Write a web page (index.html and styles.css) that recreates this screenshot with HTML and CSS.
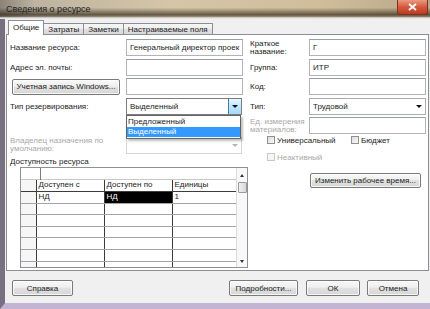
FILE: index.html
```html
<!DOCTYPE html>
<html lang="ru">
<head>
  <meta charset="UTF-8">
  <title>Сведения о ресурсе</title>
  <link rel="stylesheet" href="styles.css">
</head>
<body>
  <div class="window">
    <div class="titlebar">
      <span class="title">Сведения о ресурсе</span>
      <span class="close">
        <svg width="9" height="8" viewBox="0 0 9 8"><path d="M1 1 L8 7 M8 1 L1 7" stroke="#fff" stroke-width="1.8"/></svg>
      </span>
    </div>
    <div class="client">
      <div class="tabs">
        <div class="tab active">Общие</div>
        <div class="tab">Затраты</div>
        <div class="tab">Заметки</div>
        <div class="tab">Настраиваемые поля</div>
      </div>
      <div class="panel">
        <div class="form">
          <label class="lbl">Название ресурса:</label>
          <div class="field">Генеральный директор проек</div>
          <label class="lbl two">Краткое<br>название:</label>
          <div class="field wide">Г</div>

          <label class="lbl">Адрес эл. почты:</label>
          <div class="field"></div>
          <label class="lbl">Группа:</label>
          <div class="field wide">ИТР</div>

          <button class="btn win-btn">Учетная запись Windows...</button>
          <div class="field"></div>
          <label class="lbl">Код:</label>
          <div class="field wide"></div>

          <label class="lbl">Тип резервирования:</label>
          <div class="select focus">
            <span>Выделенный</span>
            <span class="drop"><i class="arrow"></i></span>
            <ul class="list">
              <li>Предложенный</li>
              <li class="hl">Выделенный</li>
            </ul>
          </div>
          <label class="lbl">Тип:</label>
          <div class="select wide plain">
            <span>Трудовой</span>
            <span class="drop"><i class="arrow"></i></span>
          </div>

          <label class="lbl two off r5">Ед. измерения<br>материалов:</label>
          <div class="field wide r5"></div>

          <label class="lbl two off r6">Владелец назначения по<br>умолчанию:</label>
          <div class="select disabled r6">
            <span></span>
            <span class="drop"><i class="arrow"></i></span>
          </div>
          <div class="checks">
            <div class="check-row">
              <span class="chk first"><i class="box"></i>Универсальный</span>
              <span class="chk"><i class="box"></i>Бюджет</span>
            </div>
            <span class="chk off"><i class="box"></i>Неактивный</span>
          </div>

          <label class="lbl section">Доступность ресурса</label>
        </div>

        <div class="avail">
          <div class="datagrid">
            <div class="dg-body">
              <div class="dg-top"><div class="dg-corner"></div></div>
              <table class="dg">
                <colgroup><col class="c0"><col class="c1"><col class="c2"><col class="c3"></colgroup>
                <tr class="dg-head"><td class="rh"></td><td>Доступен с</td><td>Доступен по</td><td>Единицы</td></tr>
                <tr><td class="rh"></td><td>НД</td><td class="sel">НД</td><td>1</td></tr>
                <tr><td class="rh"></td><td></td><td></td><td></td></tr>
                <tr><td class="rh"></td><td></td><td></td><td></td></tr>
                <tr><td class="rh"></td><td></td><td></td><td></td></tr>
                <tr><td class="rh"></td><td></td><td></td><td></td></tr>
                <tr><td class="rh"></td><td></td><td></td><td></td></tr>
                <tr><td class="rh"></td><td></td><td></td><td></td></tr>
              </table>
            </div>
            <div class="vscroll">
              <i class="sarrow up"></i>
              <div class="thumb"></div>
              <i class="sarrow down"></i>
            </div>
          </div>
          <button class="btn work-btn">Изменить рабочее время...</button>
        </div>
      </div>

      <div class="footer">
        <button class="btn help">Справка</button>
        <button class="btn more">Подробности...</button>
        <button class="btn ok">ОК</button>
        <button class="btn cancel">Отмена</button>
      </div>
    </div>
  </div>
</body>
</html>
```

FILE: styles.css
```css
* { box-sizing: border-box; }
body { margin: 0; font-family: "Liberation Sans", Arial, sans-serif; font-size: 8px; color: #1c1c1c; background: #fff; }

.window { width: 430px; height: 309px; display: flex; flex-direction: column; overflow: hidden; }

/* заголовок окна */
.titlebar { height: 19px; display: flex; align-items: flex-start;
  background:
    linear-gradient(to bottom, rgba(0,0,0,0) 40%, rgba(40,28,14,0.65) 78%, rgba(70,60,50,0.4) 88%, #e6e6e6 94%),
    linear-gradient(to right, #8a8478 0%, #bdb3a0 8%, #d5c6a8 40%, #cfbd9a 75%, #b9a98a 100%); }
.title { font-size: 9px; margin: 4px 0 0 6px; color: #202020; }
.close { margin: 0 2px 0 auto; width: 31px; height: 15px; display: flex; align-items: center; justify-content: center;
  background: linear-gradient(#e99a82, #d45a3e 50%, #bb3a20); border: 1px solid #7d3220; border-top: 0; border-radius: 0 0 3px 3px; }

.client { flex: 1; display: flex; flex-direction: column; background: #f0f0f0;
  border-left: 5px solid #777080; border-bottom: 6px solid #c2b4d2; }

/* вкладки */
.tabs { display: flex; align-items: flex-end; height: 16px; padding-left: 3px; }
.tab { height: 12px; line-height: 11px; padding: 0 4px; margin-left: -1px; border: 1px solid #8c8e94; border-bottom: 0;
  background: linear-gradient(#f6f6f6, #ececec 50%, #e0e0e0 50%, #d8d8d8); }
.tab.active { height: 15px; line-height: 13px; margin-left: 0; background: #fff; position: relative; z-index: 1; }

.panel { margin: -1px 1px 0 1px; height: 237px; border: 1px solid #8c8e94; background: #fff; padding: 4px 0 0 3px; }

/* форма */
.form { display: grid; grid-template-columns: 116px 124px 59px 117px; grid-template-rows: repeat(6, 17px) 10px;
  row-gap: 2.6px; align-items: center; }
.lbl { white-space: nowrap; }
.lbl.two { line-height: 8px; }
.lbl.off { color: #a8a8a8; }
.r5 { grid-row: 5; }
.r5.lbl { grid-column: 3; }
.r5.field { grid-column: 4; }
.r6 { grid-row: 6; }
.r6.lbl { grid-column: 1; }
.r6.select { grid-column: 2; }
.section { grid-column: 1 / 3; grid-row: 7; }

.field { width: 117px; height: 17px; border: 1px solid #b0b3ba; border-top-color: #9a9da4; background: #fff;
  padding-left: 3px; line-height: 15px; white-space: nowrap; overflow: hidden; }

.select { position: relative; width: 116px; height: 17px; border: 1px solid #a9acb3; background: #fff;
  display: flex; align-items: center; padding-left: 3px; }
.select.wide { width: 117px; }
.select span:first-child { flex: 1; }
.drop { width: 13px; height: 15px; display: flex; align-items: center; justify-content: center; }
.arrow { width: 0; height: 0; border-left: 3px solid transparent; border-right: 3px solid transparent; border-top: 3px solid #111; }
.select.focus { border-color: #7a7d84; }
.select.focus .drop { border-left: 1px solid #3c7fb1; background: linear-gradient(#eaf6fd, #bee6fd 50%, #a7d9f5); }
.select.disabled { border-color: #d6d6d6; }
.select.disabled .arrow { border-top-color: #b4b4b4; }

.list { position: absolute; left: -1px; top: 16px; width: 115px; margin: 0; padding: 1px 0; list-style: none;
  background: #fff; border: 1px solid #646464; box-shadow: 2px 2px 2px rgba(0,0,0,0.25); z-index: 2; }
.list li { height: 10px; line-height: 10px; padding-left: 1px; }
.list li.hl { background: #3399ff; color: #fff; }

.checks { grid-column: 3 / 5; grid-row: 6 / 8; align-self: start; margin-top: -1px; padding-left: 17px;
  display: flex; flex-direction: column; gap: 8px; }
.check-row { display: flex; }
.chk { display: flex; align-items: center; height: 9px; white-space: nowrap; }
.chk.first { width: 84px; }
.chk.off { color: #a8a8a8; }
.box { width: 8px; height: 8px; margin-right: 2px; border: 1px solid #8f8f8f; background: linear-gradient(135deg, #dcdcdc, #fafafa); }
.chk.off .box { border-color: #c8c8c8; background: #f6f6f6; }

/* кнопки */
.btn { height: 16px; padding: 0; border: 1px solid #7a7a7a; border-radius: 2px; font: inherit; color: #1c1c1c; text-align: center;
  background: linear-gradient(#f8f8f8, #efefef 45%, #e2e2e2 50%, #d6d6d6); box-shadow: inset 0 0 0 1px rgba(255,255,255,0.75); }
.win-btn { width: 108px; height: 16px; margin-left: 2px; }

/* доступность */
.avail { display: flex; align-items: flex-start; }
.datagrid { display: flex; width: 228px; height: 101px; margin-left: 10px; border: 1px solid #8e9096; background: #fff; overflow: hidden; }
.dg-body { width: 216px; overflow: hidden; }
.dg-top { height: 12px; border-bottom: 1px solid #c8c8c8; }
.dg-corner { width: 20px; height: 12px; border-right: 1px solid #7c7c7c; }
.dg { border-collapse: collapse; table-layout: fixed; width: 216px; }
.c0 { width: 15px; } .c1 { width: 68px; } .c2 { width: 68px; } .c3 { width: 65px; }
.dg td { height: 11.6px; padding: 0 0 0 2px; line-height: 10px; white-space: nowrap; overflow: hidden;
  border-right: 1px solid #3c3c3c; border-bottom: 1px solid #a4a4a4; }
.dg .dg-head td { height: 12px; border-bottom-color: #3c3c3c; }
.dg td.rh { background: #f6f6f6; }
.dg td.sel { background: #000; color: #fff; }

.vscroll { width: 11px; border-left: 1px solid #dcdcdc; background: #f8f8f8; display: flex; flex-direction: column; align-items: center; padding: 6px 0 4px; }
.sarrow { width: 0; height: 0; border-left: 2px solid transparent; border-right: 2px solid transparent; }
.sarrow.up { border-bottom: 3px solid #333; }
.sarrow.down { border-top: 3px solid #333; margin-top: auto; }
.thumb { width: 9px; height: 11px; margin-top: 5px; border: 1px solid #9a9a9a; border-radius: 1px; background: linear-gradient(to right, #f0f0f0, #d8d8d8); }

.work-btn { width: 111px; height: 15px; margin: 6px 0 0 62px; }

/* нижние кнопки */
.footer { display: flex; padding: 9px 0 0 7px; }
.help { width: 61px; }
.more { width: 69px; margin-left: 156px; }
.ok { width: 54px; margin-left: 8px; }
.cancel { width: 52px; margin-left: 7px; }
```
